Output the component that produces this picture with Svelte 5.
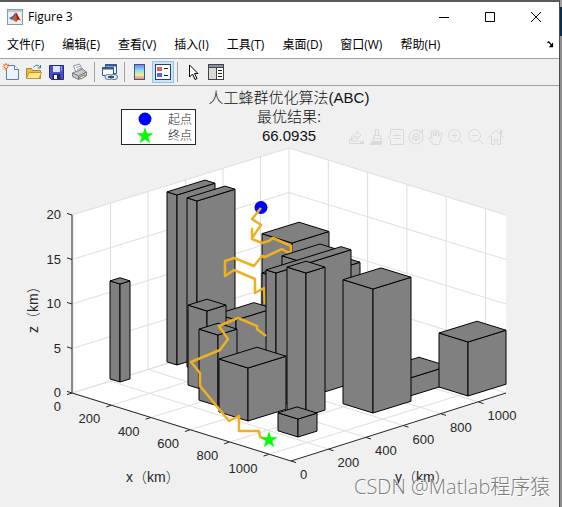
<script>
  const menus = ['文件(F)', '编辑(E)', '查看(V)', '插入(I)', '工具(T)', '桌面(D)', '窗口(W)', '帮助(H)'];

  // Screen-space projection of the axes box
  const LEFT = [72, 393];
  const FRONT = [291, 461];
  const H = 178;
  const S = 0.31;
  const ticks = [0, 200, 400, 600, 800, 1000];
  const zTicks = [0, 5, 10, 15, 20];

  const xt = (v) => [LEFT[0] + v * 0.1965, LEFT[1] + v * 0.0615];
  const yt = (v) => [FRONT[0] + v * 0.1875, FRONT[1] - v * 0.059];
  const zt = (v) => LEFT[1] - v * 8.9;

  const grid = [];
  for (const v of ticks) {
    const [ax, ay] = xt(v);
    grid.push([ax, ay, ax + 216, ay - 67]);
    grid.push([ax + 217, ay - 67, ax + 217, ay - 67 - H]);
    const [bx, by] = yt(v);
    grid.push([bx, by, bx - 218, by - 68]);
    grid.push([bx - 218, by - 68, bx - 218, by - 68 - H]);
  }
  for (const v of zTicks) {
    const y = zt(v);
    grid.push([72, y, 289, y - 67]);
    grid.push([289, y - 67, 506, y]);
  }

  // front-top x, front-top y, left extent, right extent, height
  const rear = [
    [120, 284, 10, 10, 98],
    [177, 195, 10, 38, 170],
    [197, 201, 10, 38, 169],
    [292, 243, 30, 37, 100],
    [272, 276, 10, 38, 60],
    [236, 320, 19, 37, 80]
  ];
  const fore = [
    [322, 274, 10, 38, 100],
    [302, 262, 20, 38, 120],
    [276, 273, 10, 75, 134],
    [207, 311, 19, 19, 80],
    [218, 335, 19, 19, 71],
    [306, 273, 19, 19, 143],
    [248, 368, 29, 38, 53],
    [298, 419, 20, 19, 18],
    [410, 378, 29, 38, 18],
    [373, 289, 30, 38, 124],
    [468, 342, 29, 38, 54]
  ];

  const faces = ([x, y, a, b, h]) => {
    const l = [x - a, y - a * S];
    const r = [x + b, y - b * S];
    const k = [x - a + b, y - (a + b) * S];
    const down = (p) => [p[0], p[1] + h];
    const f = [x, y];
    return [[l, f, down(f), down(l)], [f, r, down(r), down(f)], [l, f, r, k]].map((q) => q.map((p) => p.join(',')).join(' '));
  };

  const pathFar = '261,208 252,219 261,225 252,238 252,229 252,239 262,243 269,241 273,238 291,246 291,253 287,252 282,249 265,257 262,256 254,266 234,258 225,261 225,276 234,270 255,279 255,293 264,288 265,304';
  const pathNear = '266,336 257,329 257,326 238,318 219,326 228,339 220,350 191,362 200,373 200,386 229,421 239,416 239,431 259,431 260,437 268,440';

  const star = (cx, cy, r) =>
    Array.from({ length: 10 }, (_, i) => {
      const q = i % 2 ? r * 0.38 : r;
      const t = (Math.PI * i) / 5 - Math.PI / 2;
      return `${cx + q * Math.cos(t)},${cy + q * Math.sin(t)}`;
    }).join(' ');
</script>

<div class="desktop">
  <main class="window">
    <header class="titlebar">
      <svg class="logo" width="16" height="16" viewBox="0 0 16 16" aria-hidden="true">
        <rect x=".5" y=".5" width="15" height="15" fill="#e9eef3" stroke="#8b9aa8" />
        <rect x="1" y="1" width="14" height="2" fill="#b8c8d8" />
        <path d="M2 9 L5 7.5 L7 9.5 L5 11Z" fill="#2a72b5" />
        <path d="M5 7.5 C7 7 7 4 9 3.5 L7 9.5Z" fill="#3d4f74" />
        <path d="M5 11 L7 9.5 C8 7 8 4 9 3.5 C10.5 5 11.5 9 14 11.5 C12 10 11 10.500 9.500 13 C8.500 13 7 11 5 11Z" fill="#d9541e" />
        <path d="M9 3.500 C10.500 5 11.500 9 14 11.500 C12 10 11 10 10 11Z" fill="#8d1d12" />
      </svg>
      <h1>Figure 3</h1>
      <div class="controls">
        <button aria-label="最小化"><svg width="12" height="12" viewBox="0 0 12 12"><path d="M1 6.500h10" /></svg></button>
        <button aria-label="最大化"><svg width="12" height="12" viewBox="0 0 12 12"><path d="M1.500 1.500h9v9h-9z" /></svg></button>
        <button aria-label="关闭"><svg width="12" height="12" viewBox="0 0 12 12"><path d="M1 1l10 10M11 1L1 11" /></svg></button>
      </div>
    </header>

    <nav class="menubar">
      {#each menus as m}<button>{m}</button>{/each}
      <button class="dock" aria-label="停靠">
        <svg width="7" height="7" viewBox="0 0 8 8"><path d="M.5 2 L2 1 L5 4.500" fill="none" stroke="#000" stroke-width="1.500" /><path d="M7 1.500V7H2z" /></svg>
      </button>
    </nav>

    <div class="toolbar">
      <button aria-label="新建">
        <svg width="18" height="18" viewBox="0 0 18 18"><path d="M4.500 2.500h8l4 4v10h-12z" fill="#edf4fd" stroke="#5b7cae" /><path d="M12.500 2.500v4h4" fill="#fff" stroke="#5b7cae" /><circle cx="4" cy="3.500" r="2" fill="#fff3b0" stroke="#dd6b35" /><path d="M4 0v1M1 .8l1 1M7 .8l-1 1M.5 3.500h-1M1 6.500l1-1M4 6v2" stroke="#dd6b35" /></svg>
      </button>
      <button aria-label="打开">
        <svg width="18" height="18" viewBox="0 0 18 18"><path d="M1.500 15.500v-10h5l1 2h8v8z" fill="#e8bd48" stroke="#b5852a" /><path d="M1.500 15.500l2.500-6h12.500l-2.500 6z" fill="#ffe98c" stroke="#c4952f" /><path d="M8.500 4.500c2-3 5-3 6-.5M15.500 2v3h-3" fill="none" stroke="#466fa3" /></svg>
      </button>
      <button aria-label="保存">
        <svg width="18" height="18" viewBox="0 0 18 18"><path d="M1.500 2.500h14v14h-12l-2-2z" fill="#4c50cc" stroke="#27287e" /><path d="M5 3h7v6H5z" fill="#dfe7fa" /><path d="M4.500 11h8v5h-8z" fill="#202668" /><path d="M6 12h3v4H6z" fill="#fff" /><path d="M13.500 3v5" stroke="#8f98f0" /></svg>
      </button>
      <button aria-label="打印">
        <svg width="18" height="18" viewBox="0 0 18 18"><path d="M5 9L2.500 3l6-2 3 6z" fill="#fff" stroke="#8a8f9a" /><path d="M5 4.500l4-1M6 6.500l4-1" stroke="#999" /><path d="M1.500 10l10-4 4 3v3.500l-8 4-6-3z" fill="#c6c9ce" stroke="#777c84" /><path d="M1.500 10l6 3 8-4M7.500 13v3.500" fill="none" stroke="#777c84" /><path d="M8 14.500l5-2.500 2 1-5 3z" fill="#f6f0b0" stroke="#777" /></svg>
      </button>
      <span class="sep"></span>
      <button aria-label="链接绘图">
        <svg width="18" height="18" viewBox="0 0 18 18"><path d="M4.500 1.500h11v9h-11z" fill="#eef4fc" stroke="#32578f" /><path d="M4 2.500h12" stroke="#32578f" stroke-width="2" /><path d="M1.500 4.500h11v8h-11z" fill="#fff" stroke="#32578f" /><path d="M1 5.500h12" stroke="#32578f" stroke-width="2" /><rect x="4" y="11.500" width="7" height="5" rx="2.500" fill="#dce7ef" stroke="#587a9a" /><rect x="9.500" y="11.500" width="7" height="5" rx="2.500" fill="#dce7ef" stroke="#587a9a" /><path d="M7 14h6" stroke="#36556f" stroke-width="2" /></svg>
      </button>
      <span class="sep"></span>
      <button aria-label="插入颜色栏">
        <svg width="18" height="18" viewBox="0 0 18 18"><defs><linearGradient id="bar" x1="0" x2="0" y1="0" y2="1"><stop offset="0" stop-color="#7779ee" /><stop offset=".4" stop-color="#88e3ee" /><stop offset=".7" stop-color="#f8eb90" /><stop offset="1" stop-color="#ee7e72" /></linearGradient></defs><rect x="3.500" y="1.500" width="10" height="15" fill="url(#bar)" stroke="#3b5687" /></svg>
      </button>
      <button class="on" aria-label="插入图例" aria-pressed="true">
        <svg width="18" height="18" viewBox="0 0 18 18"><rect x="1.500" y="1.500" width="15" height="15" fill="#fff" stroke="#24406f" /><path d="M3 4h5v4H3z" fill="#ef5a5a" /><path d="M3 10h5v4H3z" fill="#625ff0" /><path d="M10 5.500h4M10 12.500h4" stroke="#222" /></svg>
      </button>
      <span class="sep"></span>
      <button aria-label="编辑绘图">
        <svg width="18" height="18" viewBox="0 0 18 18"><path d="M5.500 2v12l3-3 2.500 5.500 2-1-2.500-5H14z" fill="#fff" stroke="#000" /></svg>
      </button>
      <button aria-label="属性检查器">
        <svg width="18" height="18" viewBox="0 0 18 18"><rect x="1.500" y="1.500" width="15" height="15" fill="#fff" stroke="#444" /><path d="M2 2h14v2H2z" fill="#8493a5" /><path d="M2 5h7v11H2z" fill="#d9d9d9" /><path d="M2 4.500h14M9.500 5v11" stroke="#444" /><path d="M11 7.500h4M11 10.500h4M11 13.500h4" stroke="#222" /></svg>
      </button>
    </div>

    <section class="figure">
      <svg class="plot" viewBox="0 86 559 421" role="img" aria-label="人工蜂群优化算法(ABC)">
        <polygon points="72,393 291,461 506,393 506,215 289,148 72,215" fill="#fff" />
        <g class="grid">
          {#each grid as [x1, y1, x2, y2]}<line {x1} {y1} {x2} {y2} />{/each}
        </g>
        <g class="axis">
          <polyline points="72,215 72,393 291,461 506,393" />
          {#each ticks as v}
            <line x1={xt(v)[0]} y1={xt(v)[1]} x2={xt(v)[0] - 5} y2={xt(v)[1] + 1.6} />
            <line x1={yt(v)[0]} y1={yt(v)[1]} x2={yt(v)[0] + 5} y2={yt(v)[1] + 1.6} />
          {/each}
          {#each zTicks as v}
            <line x1="72" y1={zt(v)} x2="67" y2={zt(v) - 1.6} />
          {/each}
        </g>

        <g class="box">
          {#each rear as b}{#each faces(b) as points}<polygon {points} />{/each}{/each}
        </g>
        <circle cx="261" cy="207.500" r="6.500" fill="#00f" />
        <polyline class="route" points={pathFar} />
        <g class="box">
          {#each fore as b}{#each faces(b) as points}<polygon {points} />{/each}{/each}
        </g>
        <polyline class="route" points={pathNear} />
        <polygon points={star(269, 440, 9)} fill="#0f0" />

        <g class="tick">
          {#each ticks as v}
            <text x={xt(v)[0] - 11} y={xt(v)[1] + 18} text-anchor="end">{v}</text>
            <text x={yt(v)[0] + 9} y={yt(v)[1] + 18}>{v}</text>
          {/each}
          {#each zTicks as v}
            <text x="61" y={zt(v) + 4} text-anchor="end">{v}</text>
          {/each}
        </g>
        <g class="name">
          <text x="126" y="482">x（km）</text>
          <text x="395" y="482">y（km）</text>
          <text transform="translate(38 333) rotate(-90)">z（km）</text>
        </g>
        <g class="title">
          <text x="289" y="103">人工蜂群优化算法(ABC)</text>
          <text x="289" y="122">最优结果:</text>
          <text x="289" y="141">66.0935</text>
        </g>
        <g class="legend">
          <rect x="121.500" y="109.500" width="74" height="35" fill="#fff" stroke="#262626" />
          <circle cx="145" cy="119" r="6.500" fill="#00f" />
          <polygon points={star(145, 136, 9)} fill="#0f0" />
          <text x="168" y="124">起点</text>
          <text x="168" y="140">终点</text>
        </g>
        <text class="mark" x="354" y="494">CSDN @Matlab程序猿</text>
      </svg>

      <div class="axtools">
        <button aria-label="导出"><svg viewBox="0 0 16 16"><path d="M1.500 10v4.500h11V12M3 11.500c0-4 2-6.500 6-6.500V2l4 4-4 4V7.500c-3 0-4 1.500-6 4zM3 12h8" /><path d="M16 11v4h-4z" fill="#d9d9d9" stroke="none" /></svg></button>
        <button aria-label="刷亮"><svg viewBox="0 0 16 16"><path d="M7.500.5h3v6h-3zM5.500 6.500h7v3h-7zM5.500 9.500c-.5 3-2 5-4 6h12v-6z" /><path d="M5 12h8v3H3z" fill="#d9d9d9" stroke="none" /></svg></button>
        <button aria-label="数据提示"><svg viewBox="0 0 16 16"><path d="M2.500.5h13v15h-13v-5L.5 8l2-2.500zM5 6.500h8M5 9.500h8" /></svg></button>
        <button aria-label="三维旋转"><svg viewBox="0 0 16 16"><path d="M11.500 2A7 7 0 1 0 14.500 5.500M11 3.500l3.500-3v4z" /><path d="M8 4.500l3 1.700v3.600l-3 1.700-3-1.700V6.200zM5 6.200l3 1.800 3-1.800M8 8v3.500" /></svg></button>
        <button aria-label="平移"><svg viewBox="0 0 16 16"><path d="M5 15.500c-1-2-3-4-4.500-6.500 1-1.500 2.500-.5 3.500 1L3 3.500c0-1.500 1.500-1.500 2 0L6 7V1.500c0-1.300 2-1.300 2 0V7l1-5c.3-1.300 2-1 2 .3L10.500 7.500l2-3.500c.7-1 2-.3 1.700 1l-1.700 6c-.5 2-1 3-1.500 4.500z" /></svg></button>
        <button aria-label="放大"><svg viewBox="0 0 16 16"><circle cx="6.500" cy="6.500" r="6" /><path d="M11 11l4.500 4.500M3.500 6.500h6M6.500 3.500v6" /></svg></button>
        <button aria-label="缩小"><svg viewBox="0 0 16 16"><circle cx="6.500" cy="6.500" r="6" /><path d="M11 11l4.500 4.500M3.500 6.500h6" /></svg></button>
        <button aria-label="还原视图"><svg viewBox="0 0 16 16"><path d="M.5 8.500L8 1l7.500 7.500M3.500 7v8.500h3v-5h3v5h3V7M12.500 5V1.500h1V6" /></svg></button>
      </div>
    </section>
  </main>
  <aside class="edge"></aside>
</div>

<style>
  :global(body) {
    margin: 0;
    background: #8e8e8e;
  }
  .desktop {
    display: flex;
    min-height: 100vh;
    font-family: 'Open Sans', 'Noto Sans CJK SC', sans-serif;
    overflow: hidden;
  }
  .window {
    flex: 1;
    min-width: 0;
    box-sizing: border-box;
    display: flex;
    flex-direction: column;
    background: #f0f0f0;
    border-top: 2px solid #5a5a5a;
    border-right: 1px solid #4c4c4c;
  }
  .edge {
    width: 2px;
    background: linear-gradient(#a0a0a0 7px, #0b2c4d 7px, #0b2c4d 36px, #8e8e8e 36px);
  }
  button {
    display: flex;
    align-items: center;
    justify-content: center;
    padding: 0;
    border: 0;
    background: none;
    color: #000;
    font: inherit;
  }
  .titlebar {
    display: flex;
    align-items: center;
    height: 29px;
    padding-left: 7px;
    background: #fff;
  }
  h1 {
    flex: 1;
    margin: 0 0 0 5px;
    font-size: 12px;
    font-weight: 400;
    line-height: 16px;
  }
  .controls {
    display: flex;
  }
  .controls button {
    width: 46px;
    height: 28px;
  }
  .controls svg {
    fill: none;
    stroke: #000;
  }
  .menubar {
    display: flex;
    align-items: center;
    gap: 18px;
    height: 27px;
    padding: 0 5px 0 7px;
    background: #fff;
    border-bottom: 1px solid #a0a0a0;
    font-size: 12px;
    line-height: 16px;
    white-space: nowrap;
  }
  .dock {
    margin-left: auto;
  }
  .toolbar {
    display: flex;
    align-items: center;
    height: 26px;
    border-bottom: 1px solid #a0a0a0;
  }
  .toolbar button {
    width: 22px;
    height: 22px;
    box-sizing: border-box;
    margin-right: 1px;
  }
  .toolbar .on {
    background: #cce4f7;
    border: 1px solid #8fc4ec;
  }
  .sep {
    width: 1px;
    height: 20px;
    margin: 0 4px 0 2px;
    background: #a0a0a0;
  }
  .figure {
    position: relative;
    flex: 1;
  }
  .plot {
    display: block;
    width: 100%;
    font-family: 'Liberation Sans', 'Noto Sans CJK SC', sans-serif;
    fill: #262626;
  }
  .grid {
    fill: none;
    stroke: #dedede;
  }
  .axis {
    fill: none;
    stroke: #262626;
  }
  .box {
    fill: #808080;
    stroke: #000;
    stroke-linejoin: round;
  }
  .route {
    fill: none;
    stroke: #edb120;
    stroke-width: 2.5;
    stroke-linejoin: round;
  }
  .tick {
    font-size: 13px;
  }
  .name {
    font-size: 14px;
    font-weight: 300;
  }
  .title {
    font-size: 15px;
    font-weight: 300;
    text-anchor: middle;
    fill: #111;
  }
  .legend {
    font-size: 12px;
    font-weight: 300;
  }
  .mark {
    font-family: 'Open Sans', 'Noto Sans CJK SC', sans-serif;
    font-size: 20px;
    font-weight: 300;
    fill: #7c7c7c;
    text-shadow: 1px 1px 0 #fff;
  }
  .axtools {
    position: absolute;
    top: 43px;
    right: 55px;
    display: flex;
    gap: 4px;
  }
  .axtools svg {
    width: 16px;
    height: 16px;
    fill: none;
    stroke: #d9d9d9;
  }
</style>
